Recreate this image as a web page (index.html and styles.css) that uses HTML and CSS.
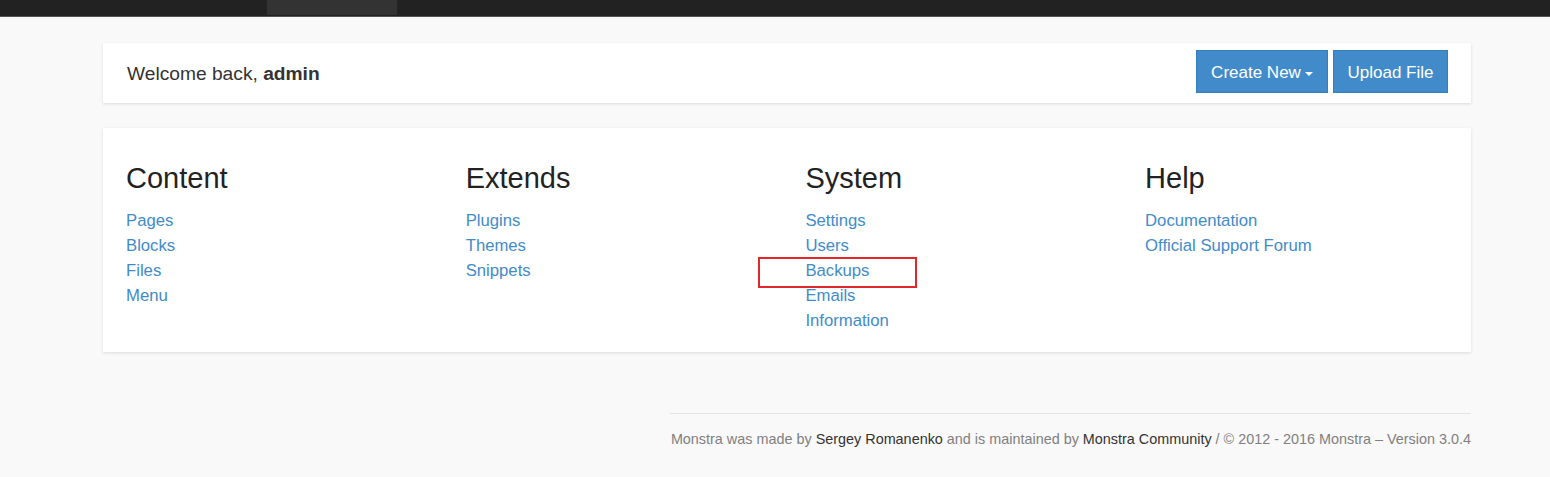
FILE: index.html
```html
<!DOCTYPE html>
<html>
<head>
<meta charset="utf-8">
<link rel="stylesheet" href="styles.css">
</head>
<body>
<div class="navbar"><div class="nav-active"></div></div>
<div class="container">
  <div class="panel welcome">
    <div class="welcome-text">Welcome back, <b>admin</b></div>
    <div class="btns">
      <a class="btn btn-create">Create New <span class="caret"></span></a>
      <a class="btn btn-upload">Upload File</a>
    </div>
  </div>
  <div class="panel menu">
    <div class="col">
      <h2>Content</h2>
      <a>Pages</a><a>Blocks</a><a>Files</a><a>Menu</a>
    </div>
    <div class="col">
      <h2>Extends</h2>
      <a>Plugins</a><a>Themes</a><a>Snippets</a>
    </div>
    <div class="col">
      <h2>System</h2>
      <a>Settings</a><a>Users</a><a class="marked">Backups<span class="mark"></span></a><a>Emails</a><a>Information</a>
    </div>
    <div class="col">
      <h2>Help</h2>
      <a>Documentation</a><a>Official Support Forum</a>
    </div>
  </div>
  <div class="footer">
    Monstra was made by <a>Sergey Romanenko</a> and is maintained by <a>Monstra Community</a> / © 2012 - 2016 Monstra – Version 3.0.4
  </div>
</div>
</body>
</html>
```

FILE: styles.css
```css
html, body {
  margin: 0;
  padding: 0;
  background: #f9f9f9;
  font-family: "Liberation Sans", Arial, sans-serif;
  color: #333;
}
.navbar {
  height: 16px;
  background: #222;
  border-bottom: 1px solid #555;
  position: relative;
}
.nav-active {
  position: absolute;
  left: 267px;
  top: 0;
  width: 130px;
  height: 15px;
  background: #333;
}
.container {
  margin-left: 103px;
  width: 1368px;
  padding-top: 26px;
}
.panel {
  background: #fff;
  box-shadow: 0 1px 3px rgba(0,0,0,0.12);
}
.welcome {
  display: flex;
  align-items: center;
  justify-content: space-between;
  padding: 7px 23px 10px 24px;
}
.welcome-text {
  font-size: 19.2px;
  color: #333;
  padding-top: 5px;
}
.welcome-text b { color: #333; }
.btns {
  display: flex;
  gap: 5px;
}
.btn {
  display: flex;
  align-items: center;
  justify-content: center;
  box-sizing: border-box;
  height: 43px;
  padding-top: 2px;
  background: #428bca;
  border: 1px solid #357ebd;
  color: #fff;
  font-size: 17px;
  white-space: nowrap;
}
.btn-create { width: 132px; }
.btn-upload { width: 115px; }
.caret {
  display: inline-block;
  margin-left: 4px;
  margin-top: 2px;
  border-top: 4px solid #fff;
  border-left: 4px solid transparent;
  border-right: 4px solid transparent;
}
.menu {
  margin-top: 25px;
  display: flex;
  padding: 34px 4px 19px;
}
.col {
  width: 339.7px;
  flex-shrink: 0;
  box-sizing: border-box;
  padding-left: 19px;
  display: flex;
  flex-direction: column;
  align-items: flex-start;
}
.col h2 {
  margin: 0 0 13px;
  font-size: 29px;
  font-weight: 400;
  line-height: 33px;
  color: #222;
}
.col a {
  font-size: 16.7px;
  line-height: 25px;
  color: #428bca;
}
.marked { position: relative; }
.mark {
  position: absolute;
  left: -47px;
  top: -1px;
  width: 155px;
  height: 27px;
  border: 2px solid #e3262b;
}
.footer {
  margin-top: 61px;
  margin-left: auto;
  width: 801px;
  border-top: 1px solid #e3e3e3;
  padding-top: 16px;
  text-align: right;
  font-size: 14.4px;
  line-height: 18px;
  color: #808080;
}
.footer a { color: #333; }
```
